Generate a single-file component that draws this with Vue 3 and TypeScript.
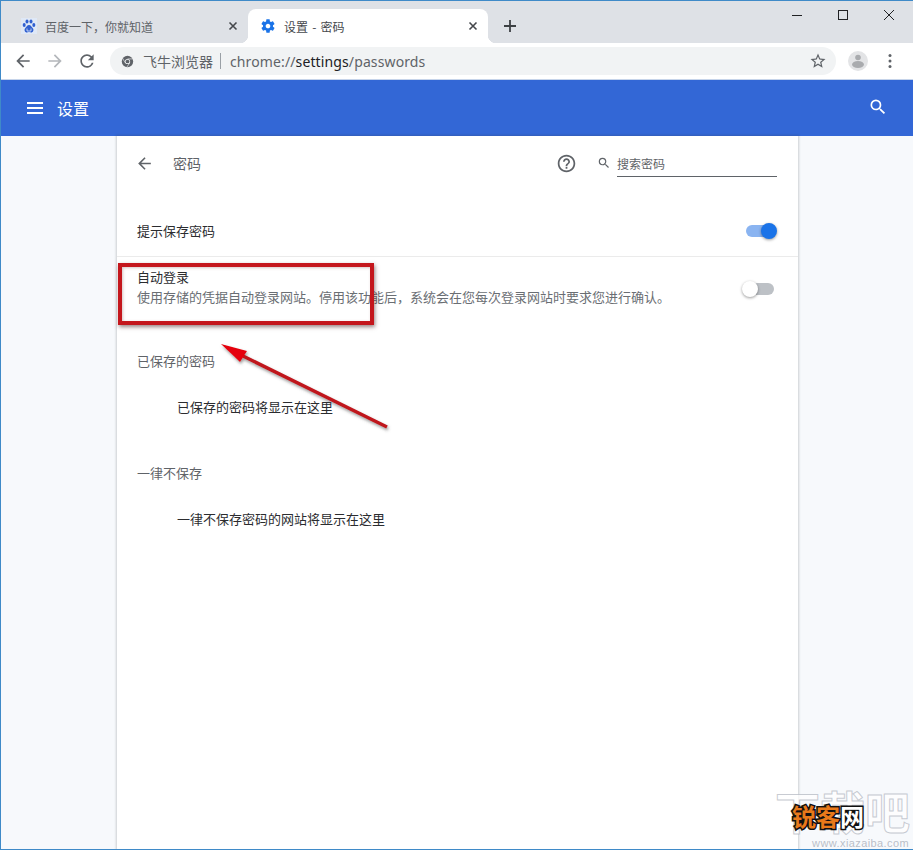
<template>
  <div class="window">
    <div class="tabstrip">
      <div class="tab">
        <svg class="favicon" viewBox="0 0 16 16">
          <rect width="16" height="16" fill="#dfe8f6" />
          <ellipse cx="3.200" cy="7" rx="1.500" ry="2" fill="#2f5fd0" />
          <ellipse cx="6" cy="3.400" rx="1.500" ry="2" fill="#2f5fd0" />
          <ellipse cx="10" cy="3.400" rx="1.500" ry="2" fill="#2f5fd0" />
          <ellipse cx="12.800" cy="7" rx="1.500" ry="2" fill="#2f5fd0" />
          <path d="M8 7c-2 0-2.500 2-4 3.500-1 1.500-.2 4 2 4 1 0 1.300-.4 2-.4s1 .4 2 .4c2.200 0 3-2.500 2-4C10.500 9 10 7 8 7z" fill="#2f5fd0" />
          <path d="M6 10.500v2.500h4v-2.500" fill="none" stroke="#dfe8f6" stroke-width=".8" />
        </svg>
        <span class="tab-title">百度一下，你就知道</span>
        <svg class="tab-close" viewBox="0 0 10 10"><path d="M1.500 1.500l7 7M8.500 1.500l-7 7" /></svg>
      </div>
      <div class="tab active">
        <svg class="favicon" viewBox="0 0 24 24">
          <path fill="#1a73e8" d="M19.430 12.980c.04-.32.07-.64.07-.98s-.03-.66-.07-.98l2.110-1.650c.19-.15.24-.42.12-.64l-2-3.460c-.12-.22-.39-.3-.61-.22l-2.490 1c-.52-.4-1.080-.73-1.690-.98l-.38-2.650C14.460 2.180 14.250 2 14 2h-4c-.25 0-.46.18-.49.42l-.38 2.650c-.61.25-1.170.59-1.690.98l-2.490-1c-.23-.09-.49 0-.61.22l-2 3.460c-.13.22-.07.49.12.64l2.110 1.650c-.04.32-.07.65-.07.98s.03.66.07.98l-2.110 1.650c-.19.15-.24.42-.12.64l2 3.460c.12.22.39.3.61.22l2.490-1c.52.4 1.080.73 1.690.98l.38 2.650c.03.24.24.42.49.42h4c.25 0 .46-.18.49-.42l.38-2.650c.61-.25 1.170-.59 1.690-.98l2.490 1c.23.09.49 0 .61-.22l2-3.460c.12-.22.07-.49-.12-.64l-2.110-1.650zM12 15.500c-1.930 0-3.500-1.570-3.500-3.500s1.570-3.500 3.500-3.500 3.500 1.570 3.500 3.500-1.570 3.500-3.500 3.500z" />
        </svg>
        <span class="tab-title">设置 - 密码</span>
        <svg class="tab-close" viewBox="0 0 10 10"><path d="M1.500 1.500l7 7M8.500 1.500l-7 7" /></svg>
      </div>
      <svg class="new-tab" viewBox="0 0 12 12"><path d="M6 0v12M0 6h12" /></svg>
      <div class="win-controls">
        <svg viewBox="0 0 12 12"><path d="M1 6.500h10" /></svg>
        <svg viewBox="0 0 12 12"><rect x="1.500" y="1.500" width="9" height="9" /></svg>
        <svg viewBox="0 0 12 12"><path d="M1 1l10 10M11 1L1 11" /></svg>
      </div>
    </div>

    <div class="toolbar">
      <svg class="nav" viewBox="0 0 24 24"><path fill="#5f6368" d="M20 11H7.830l5.590-5.590L12 4l-8 8 8 8 1.410-1.410L7.830 13H20z" /></svg>
      <svg class="nav" viewBox="0 0 24 24"><path fill="#b4b7bb" d="M4 11h12.170l-5.590-5.590L12 4l8 8-8 8-1.410-1.410L16.170 13H4z" /></svg>
      <svg class="nav" viewBox="0 0 24 24"><path fill="#5f6368" d="M17.650 6.350A7.958 7.958 0 0 0 12 4c-4.420 0-7.990 3.580-7.990 8s3.570 8 7.990 8c3.730 0 6.840-2.550 7.730-6h-2.080A5.990 5.990 0 0 1 12 18c-3.310 0-6-2.690-6-6s2.690-6 6-6c1.660 0 3.140.69 4.220 1.780L13 11h7V4l-2.350 2.350z" /></svg>
      <div class="omnibox">
        <svg class="chrome-icon" viewBox="0 0 16 16">
          <circle cx="8" cy="8" r="7" fill="#5f6368" />
          <circle cx="8" cy="8" r="3.200" fill="#f1f3f4" />
          <circle cx="8" cy="8" r="2.300" fill="#5f6368" />
          <path d="M8 4.800h7M5.200 9.600L1.800 3.800M10.800 9.600L7 15.200" stroke="#f1f3f4" stroke-width=".8" />
        </svg>
        <span class="site">飞牛浏览器</span>
        <span class="sep"></span>
        <span class="url">chrome://<b>settings</b>/passwords</span>
        <svg class="star" viewBox="0 0 24 24"><path fill="#5f6368" d="M22 9.240l-7.190-.62L12 2 9.190 8.630 2 9.240l5.460 4.730L5.820 21 12 17.270 18.180 21l-1.630-7.030L22 9.240zM12 15.400l-3.760 2.270 1-4.280-3.320-2.880 4.380-.38L12 6.100l1.710 4.040 4.380.38-3.320 2.880 1 4.280L12 15.400z" /></svg>
      </div>
      <svg class="avatar" viewBox="0 0 20 20">
        <circle cx="10" cy="10" r="10" fill="#e3e4e6" />
        <circle cx="10" cy="6.500" r="2.800" fill="#a9abae" />
        <ellipse cx="10" cy="13.500" rx="6" ry="3.500" fill="#a9abae" />
      </svg>
      <svg class="dots" viewBox="0 0 4 16">
        <circle cx="2" cy="2.500" r="1.500" />
        <circle cx="2" cy="8" r="1.500" />
        <circle cx="2" cy="13.500" r="1.500" />
      </svg>
    </div>

    <header class="app-header">
      <svg class="menu" viewBox="0 0 16 12"><path d="M0 1h16M0 6h16M0 11h16" /></svg>
      <span class="app-title">设置</span>
      <svg class="header-search" viewBox="0 0 24 24"><path fill="#fff" d="M15.500 14h-.79l-.28-.27A6.471 6.471 0 0 0 16 9.500 6.500 6.500 0 1 0 9.500 16c1.610 0 3.090-.59 4.230-1.570l.27.28v.79l5 4.990L20.490 19l-4.990-5zm-6 0C7.010 14 5 11.990 5 9.500S7.010 5 9.500 5 14 7.010 14 9.500 11.990 14 9.500 14z" /></svg>
    </header>

    <main class="page">
      <section class="card">
        <div class="sub-head">
          <svg class="back" viewBox="0 0 24 24"><path fill="#5f6368" d="M20 11H7.830l5.590-5.590L12 4l-8 8 8 8 1.410-1.410L7.830 13H20z" /></svg>
          <span class="sub-title">密码</span>
          <svg class="help" viewBox="0 0 24 24"><path fill="#5f6368" d="M11 18h2v-2h-2v2zm1-16C6.480 2 2 6.480 2 12s4.480 10 10 10 10-4.480 10-10S17.520 2 12 2zm0 18c-4.410 0-8-3.590-8-8s3.590-8 8-8 8 3.590 8 8-3.590 8-8 8zm0-14c-2.210 0-4 1.790-4 4h2c0-1.100.9-2 2-2s2 .9 2 2c0 2-3 1.750-3 5h2c0-2.250 3-2.500 3-5 0-2.210-1.790-4-4-4z" /></svg>
          <svg class="mini-search" viewBox="0 0 24 24"><path fill="#5f6368" d="M15.500 14h-.79l-.28-.27A6.471 6.471 0 0 0 16 9.500 6.500 6.500 0 1 0 9.500 16c1.610 0 3.090-.59 4.230-1.570l.27.28v.79l5 4.990L20.490 19l-4.990-5zm-6 0C7.010 14 5 11.990 5 9.500S7.010 5 9.500 5 14 7.010 14 9.500 11.990 14 9.500 14z" /></svg>
          <div class="search-field">搜索密码</div>
        </div>

        <div class="row row-first">
          <span class="label">提示保存密码</span>
          <span class="toggle on"><i></i></span>
        </div>
        <div class="row row-second">
          <div>
            <div class="label">自动登录</div>
            <div class="desc">使用存储的凭据自动登录网站。停用该功能后，系统会在您每次登录网站时要求您进行确认。</div>
          </div>
          <span class="toggle"><i></i></span>
        </div>

        <h2 class="group group-saved">已保存的密码</h2>
        <p class="empty">已保存的密码将显示在这里</p>
        <h2 class="group group-never">一律不保存</h2>
        <p class="empty">一律不保存密码的网站将显示在这里</p>
      </section>
    </main>

    <!-- annotation laid over the screenshot -->
    <div class="red-box"></div>
    <svg class="arrow" viewBox="0 0 913 850">
      <defs>
        <filter id="soft" x="-10%" y="-10%" width="120%" height="120%">
          <feDropShadow dx="1" dy="2" stdDeviation="1.500" flood-color="#555" flood-opacity=".6" />
        </filter>
      </defs>
      <g filter="url(#soft)">
        <path d="M387 427L243 356" stroke="#c0161b" stroke-width="3.500" fill="none" />
        <path d="M221 344L247 351L240 362z" fill="#e5000f" />
      </g>
    </svg>

    <div class="watermark">
      <span class="wm-big">下载吧</span>
      <span class="wm-url">www.xiazaiba.com</span>
      <span class="wm-brand">锐客<em>网</em></span>
    </div>
  </div>
</template>

<script setup lang="ts"></script>

<style>
html, body { margin: 0; background: #fff; }
</style>

<style scoped>
.window {
  position: relative;
  width: 913px;
  height: 850px;
  box-sizing: border-box;
  border: 1px solid #3f8ac8;
  border-right-width: 0;
  overflow: hidden;
  display: flex;
  flex-direction: column;
  background: #f7f9fc;
  color: #202124;
  font-family: "Noto Sans CJK SC", "Noto Sans", sans-serif;
}

/* tab strip */
.tabstrip {
  height: 42px;
  flex: none;
  background: #dee1e6;
  display: flex;
  align-items: flex-end;
}
.tab {
  width: 247px;
  height: 34px;
  box-sizing: border-box;
  padding: 0 8px 0 20px;
  display: flex;
  align-items: center;
  border-radius: 8px 8px 0 0;
  font-size: 12px;
  color: #5f6368;
}
.tab.active {
  position: relative;
  width: 240px;
  background: #fff;
  color: #45484c;
  padding-left: 12px;
}
.tab.active::before,
.tab.active::after {
  content: "";
  position: absolute;
  bottom: 0;
  width: 8px;
  height: 8px;
}
.tab.active::before { left: -8px; background: radial-gradient(circle at 0 0, transparent 8px, #fff 8.500px); }
.tab.active::after { right: -8px; background: radial-gradient(circle at 100% 0, transparent 8px, #fff 8.500px); }
.favicon { width: 16px; height: 16px; margin-right: 8px; flex: none; }
.tab-title { flex: 1; line-height: 34px; padding-top: 2px; }
.tab.active .tab-title { word-spacing: 1.500px; }
.tab-close { width: 10px; height: 10px; margin-right: 2px; }
.tab-close path { stroke: #45484c; stroke-width: 1.600; fill: none; }
.new-tab { width: 12px; height: 12px; margin: 0 0 11px 16px; }
.new-tab path { stroke: #3c4043; stroke-width: 1.800; fill: none; }
.win-controls {
  margin-left: auto;
  align-self: flex-start;
  padding-top: 8px;
  display: flex;
  gap: 34px;
  margin-right: 18px;
}
.win-controls svg { width: 12px; height: 12px; }
.win-controls path, .win-controls rect { stroke: #202124; stroke-width: 1; fill: none; }

/* toolbar */
.toolbar {
  height: 37px;
  box-sizing: border-box;
  flex: none;
  background: #fff;
  border-bottom: 1px solid #c6d4ea;
  display: flex;
  align-items: center;
  padding-left: 12px;
}
.nav { width: 20px; height: 20px; margin-right: 12px; flex: none; }
.omnibox {
  width: 726px;
  height: 28px;
  margin-left: 1px;
  box-sizing: border-box;
  border-radius: 14px;
  background: #f1f3f4;
  display: flex;
  align-items: center;
  padding: 0 9px 0 11px;
  font-size: 14px;
  color: #5f6368;
}
.chrome-icon { width: 13px; height: 13px; margin-right: 9px; flex: none; }
.site { line-height: 28px; }
.sep { width: 1px; height: 16px; background: #9aa0a6; margin: 0 9px 0 7px; }
.url { font-family: "Noto Sans", sans-serif; font-size: 14px; letter-spacing: .12px; flex: 1; }
.url b { font-weight: 400; color: #202124; }
.star { width: 18px; height: 18px; }
.avatar { width: 20px; height: 20px; margin-left: 12px; flex: none; }
.dots { width: 4px; height: 16px; margin-left: 20px; flex: none; fill: #5f6368; }

/* blue header */
.app-header {
  height: 56px;
  flex: none;
  background: #3367d6;
  display: flex;
  align-items: center;
  padding: 0 25px 0 26px;
  color: #fff;
}
.menu { width: 16px; height: 12px; margin-right: 14px; }
.menu path { stroke: #fff; stroke-width: 2; fill: none; }
.app-title { font-size: 16px; line-height: 1; }
.header-search { width: 20px; height: 20px; margin-left: auto; margin-top: -2px; }

/* settings card */
.page { flex: 1; min-height: 0; display: flex; padding-left: 116px; }
.card {
  width: 681px;
  flex: none;
  box-sizing: border-box;
  background: #fff;
  box-shadow: 0 0 2px 1px rgba(60, 64, 67, .22);
}
.sub-head {
  height: 56px;
  margin-top: -1px;
  display: flex;
  align-items: center;
  padding: 0 21px 0 18px;
}
.back { width: 19px; height: 19px; flex: none; margin-right: 19px; }
.sub-title { font-size: 14px; color: #5f6368; }
.help { width: 21px; height: 21px; margin-left: auto; margin-right: 20px; }
.mini-search { width: 14px; height: 14px; margin-right: 6px; }
.search-field {
  width: 160px;
  height: 24px;
  box-sizing: border-box;
  border-bottom: 1px solid #5f6368;
  font-size: 12px;
  line-height: 22px;
  margin-top: 4px;
  color: #5f6368;
}
.row {
  display: flex;
  align-items: center;
  justify-content: space-between;
  padding: 0 21px 0 20px;
  font-size: 13px;
}
.row-first { height: 66px; border-bottom: 1px solid #ebebeb; padding-top: 15px; box-sizing: border-box; }
.row-second { height: 66px; box-sizing: border-box; align-items: flex-start; padding-top: 10px; }
.label { color: #2b2c2f; line-height: 20px; }
.desc { color: #6a6e73; line-height: 20px; }
.toggle {
  position: relative;
  display: block;
  width: 29px;
  height: 12px;
  border-radius: 6px;
  background: #bdc1c6;
  flex: none;
  margin-right: 3px;
}
.toggle i {
  position: absolute;
  left: -3px;
  top: -2px;
  width: 16px;
  height: 16px;
  border-radius: 50%;
  background: #fff;
  box-shadow: 0 1px 3px rgba(0, 0, 0, .4);
}
.toggle.on { background: #8ab4f1; width: 28px; }
.toggle.on i { left: 15px; background: #1a73e8; }
.row-second .toggle { margin-top: 16px; }
.group { margin: 0; padding-left: 20px; font-size: 13px; font-weight: 400; line-height: 20px; color: #5f6368; }
.group-saved { margin-top: 28px; }
.group-never { margin-top: 46px; }
.empty { margin: 26px 0 0; padding-left: 60px; font-size: 13px; line-height: 20px; color: #2b2c2f; }

/* annotation */
.red-box {
  position: absolute;
  left: 117px;
  top: 262px;
  width: 256px;
  height: 62px;
  box-sizing: border-box;
  border: 4px solid #c4161c;
  box-shadow: 1px 2px 4px rgba(70, 30, 30, .55), inset 1px 1px 3px rgba(120, 60, 60, .3);
}
.arrow { position: absolute; left: -1px; top: -1px; width: 913px; height: 850px; pointer-events: none; }

/* watermark, bottom right */
.watermark { position: absolute; right: 0; bottom: 0; width: 140px; height: 70px; }
.wm-big {
  position: absolute;
  left: 2px;
  top: 9px;
  font-size: 45px;
  line-height: 1;
  font-weight: 700;
  white-space: nowrap;
  color: rgba(255, 255, 255, .8);
  -webkit-text-stroke: 1px rgba(175, 180, 190, .7);
}
.wm-url {
  position: absolute;
  right: 4px;
  bottom: 0;
  font-family: "Liberation Sans", sans-serif;
  font-size: 11px;
  line-height: 12px;
  letter-spacing: .4px;
  color: rgba(170, 175, 185, .8);
}
.wm-brand {
  position: absolute;
  left: 19px;
  top: 25px;
  font-size: 24px;
  line-height: 1;
  font-weight: 700;
  white-space: nowrap;
  color: #e8791a;
  -webkit-text-stroke: 3px #111;
  paint-order: stroke fill;
}
.wm-brand em { font-style: normal; color: #fff; }
</style>
